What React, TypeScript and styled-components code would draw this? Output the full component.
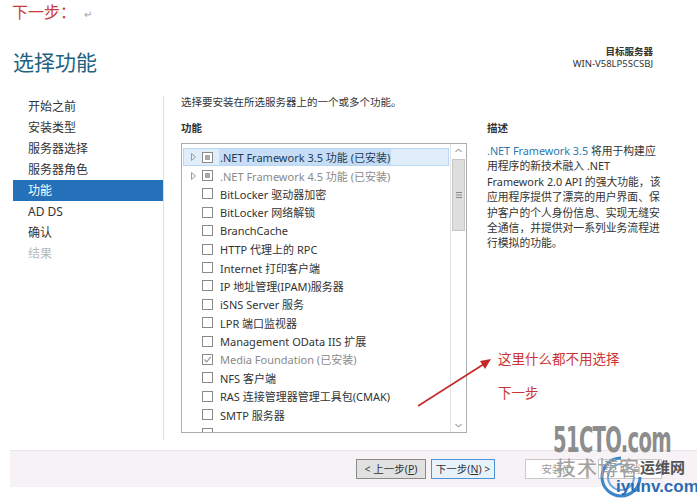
import React from 'react';
import styled, { createGlobalStyle } from 'styled-components';

const GlobalStyle = createGlobalStyle`
  html, body {
    margin: 0;
    padding: 0;
    background: #fff;
  }
  body {
    font-family: "Noto Sans", "Noto Sans CJK SC", sans-serif;
    color: #333;
  }
`;

const Page = styled.div`
  position: relative;
  width: 697px;
  height: 502px;
  overflow: hidden;
  background: #fff;
`;

// 顶部的红色批注
const NoteLine = styled.div`
  height: 22px;
  padding-left: 12px;
  font-family: "Noto Sans CJK SC", sans-serif;
  font-size: 16px;
  line-height: 22px;
  color: #c83a3a;
`;

const ReturnMark = styled.span`
  margin-left: 8px;
  font-size: 10px;
  color: #999;
`;

const Header = styled.header`
  display: flex;
  justify-content: space-between;
  align-items: flex-start;
  height: 50px;
  margin-top: 24px;
  padding: 0 44px 0 13px;
`;

const Title = styled.h1`
  margin: 0;
  font-family: "Noto Sans CJK SC", sans-serif;
  font-size: 21px;
  font-weight: 400;
  line-height: 30px;
  color: #23617f;
`;

const ServerInfo = styled.div`
  text-align: right;
  font-size: 9.5px;
  line-height: 12px;
  color: #333;
`;

const ServerLabel = styled.div`
  font-weight: 700;
`;

const Main = styled.div`
  display: flex;
  height: 344px;
`;

const Nav = styled.nav`
  width: 150px;
  margin-left: 13px;
  border-right: 1px solid #dedede;
`;

const NavItem = styled.div<{ $active?: boolean; $disabled?: boolean }>`
  height: 21px;
  padding-left: 15px;
  font-size: 12px;
  line-height: 21px;
  background: ${p => (p.$active ? '#2470b9' : 'transparent')};
  color: ${p => (p.$active ? '#fff' : p.$disabled ? '#b8b8b8' : '#333')};
`;

const Content = styled.section`
  flex: 1;
  padding-left: 17px;
`;

const Intro = styled.div`
  font-size: 10.5px;
  line-height: 12px;
  color: #333;
`;

const Columns = styled.div`
  display: flex;
  gap: 20px;
  margin-top: 13px;
`;

const FeatureColumn = styled.div`
  width: 286px;
`;

const DescColumn = styled.div`
  width: 180px;
`;

const Heading = styled.div`
  font-size: 10.5px;
  font-weight: 700;
  line-height: 14px;
  color: #333;
`;

const ListBox = styled.div`
  display: flex;
  height: 288px;
  margin-top: 8px;
  border: 1px solid #acacac;
  overflow: hidden;
`;

const Rows = styled.div`
  flex: 1;
  padding-top: 4px;
  overflow: hidden;
`;

const Row = styled.div<{ $selected?: boolean; $dim?: boolean }>`
  display: flex;
  align-items: center;
  height: 18.4px;
  margin: 0 1px;
  box-sizing: border-box;
  font-size: 11px;
  white-space: nowrap;
  color: ${p => (p.$dim ? '#8a8a8a' : '#333')};
  background: ${p => (p.$selected ? '#e0edfb' : 'transparent')};
  border: 1px solid ${p => (p.$selected ? '#b9d7f3' : 'transparent')};
`;

const Expander = styled.span`
  width: 17px;
  display: flex;
  justify-content: center;
  padding-left: 1px;
`;

const Box = styled.span`
  position: relative;
  width: 11px;
  height: 11px;
  box-sizing: border-box;
  border: 1px solid #8a8a8a;
  background: #fff;
  margin-right: 6px;
  display: flex;
  align-items: center;
  justify-content: center;
`;

const Partial = styled.span`
  width: 5px;
  height: 5px;
  background: #a8a8a8;
`;

const Label = styled.span<{ $selected?: boolean }>`
  padding: 0 1px;
  background: ${p => (p.$selected ? '#c6ddf5' : 'transparent')};
  color: ${p => (p.$selected ? '#1f3a55' : 'inherit')};
`;

const Scrollbar = styled.div`
  display: flex;
  flex-direction: column;
  width: 15px;
  border-left: 1px solid #e3e3e3;
  background: #fff;
`;

const ScrollArrow = styled.div`
  height: 13px;
  display: flex;
  align-items: center;
  justify-content: center;
`;

const Track = styled.div`
  flex: 1;
  padding: 2px 1px;
`;

const Thumb = styled.div`
  height: 72px;
  box-sizing: border-box;
  border: 1px solid #c6c6c6;
  background: #dedede;
  display: flex;
  align-items: center;
  justify-content: center;
`;

const Desc = styled.div`
  margin-top: 8px;
  font-size: 10.8px;
  line-height: 15.4px;
  color: #333;
  white-space: nowrap;
`;

const Link = styled.span`
  color: #2a78b0;
`;

const Footer = styled.footer`
  display: flex;
  align-items: center;
  justify-content: flex-end;
  height: 37px;
  margin: 10px 0 0 10px;
  padding-right: 35px;
  box-sizing: border-box;
  background: #f6f2f5;
  border-top: 1px solid #e8e3e7;
`;

const Button = styled.button<{ $kind?: 'default' | 'focus' | 'disabled'; $width: number; $gap?: number }>`
  width: ${p => p.$width}px;
  height: 20px;
  margin-left: ${p => p.$gap ?? 5}px;
  padding: 0;
  font-family: "Noto Sans", "Noto Sans CJK SC", sans-serif;
  font-size: 10.5px;
  line-height: 18px;
  box-sizing: border-box;
  color: ${p => (p.$kind === 'disabled' ? '#9a9a9a' : '#333')};
  background: ${p => (p.$kind === 'focus' ? '#e8f2fb' : p.$kind === 'disabled' ? '#fff' : '#e1e1e1')};
  border: 1px solid ${p => (p.$kind === 'focus' ? '#4e94d4' : p.$kind === 'disabled' ? '#c9c9c9' : '#8a8a8a')};
`;

const Key = styled.u`
  text-decoration: underline;
`;

// 图片上叠加的批注和水印
const Annotation = styled.div<{ $top: number }>`
  position: absolute;
  left: 498px;
  top: ${p => p.$top}px;
  font-family: "Noto Sans CJK SC", sans-serif;
  font-size: 13.5px;
  line-height: 20px;
  color: #cc3333;
`;

const Overlay = styled.svg`
  position: absolute;
  left: 0;
  top: 0;
  pointer-events: none;
`;

const Watermark = styled.div`
  position: absolute;
  left: 548px;
  top: 420px;
  width: 150px;
  height: 82px;
  pointer-events: none;
`;

const WmBig = styled.div`
  position: absolute;
  left: 5px;
  top: 2px;
  font-family: "DejaVu Sans", sans-serif;
  font-weight: 700;
  font-size: 28px;
  line-height: 30px;
  letter-spacing: -1px;
  color: #8d8d8d;
  transform: scale(0.7, 1.25);
  transform-origin: left top;
`;

const WmBlog = styled.div`
  position: absolute;
  left: 8px;
  top: 36px;
  font-family: "Noto Sans CJK SC", sans-serif;
  font-size: 20px;
  line-height: 24px;
  color: #a0a0a0;
  letter-spacing: 1px;
`;

const WmNet = styled.div`
  position: absolute;
  left: 92px;
  top: 37px;
  font-family: "Noto Sans CJK SC", sans-serif;
  font-weight: 700;
  font-size: 15px;
  line-height: 20px;
  color: #555;
`;

const WmSite = styled.div`
  position: absolute;
  left: 68px;
  top: 57px;
  font-family: "Liberation Sans", sans-serif;
  font-weight: 700;
  font-size: 17px;
  line-height: 20px;
  color: #2b6cb3;
`;

const WmSwirl = styled.svg`
  position: absolute;
  left: 50px;
  top: 34px;
`;

const Triangle = () => (
  <svg width="5" height="8" viewBox="0 0 5 8">
    <path d="M0.5 0.5 L4.5 4 L0.5 7.5 Z" fill="none" stroke="#9a9a9a" strokeWidth="1" />
  </svg>
);

const Check = () => (
  <svg width="9" height="9" viewBox="0 0 9 9">
    <path d="M1.5 4.5 L3.7 6.8 L7.8 1.8" fill="none" stroke="#9a9a9a" strokeWidth="1.3" />
  </svg>
);

type Feature = {
  label: string;
  expandable?: boolean;
  state?: 'partial' | 'checked';
  dim?: boolean;
  selected?: boolean;
};

const features: Feature[] = [
  { label: '.NET Framework 3.5 功能 (已安装)', expandable: true, state: 'partial', selected: true },
  { label: '.NET Framework 4.5 功能 (已安装)', expandable: true, state: 'partial', dim: true },
  { label: 'BitLocker 驱动器加密' },
  { label: 'BitLocker 网络解锁' },
  { label: 'BranchCache' },
  { label: 'HTTP 代理上的 RPC' },
  { label: 'Internet 打印客户端' },
  { label: 'IP 地址管理(IPAM)服务器' },
  { label: 'iSNS Server 服务' },
  { label: 'LPR 端口监视器' },
  { label: 'Management OData IIS 扩展' },
  { label: 'Media Foundation (已安装)', state: 'checked', dim: true },
  { label: 'NFS 客户端' },
  { label: 'RAS 连接管理器管理工具包(CMAK)' },
  { label: 'SMTP 服务器' },
  // 下一行只露出复选框的上沿
  { label: '' },
];

const steps = ['开始之前', '安装类型', '服务器选择', '服务器角色', '功能', 'AD DS', '确认', '结果'];

const App: React.FC = () => {
  return (
    <Page>
      <GlobalStyle />
      <NoteLine>
        下一步：<ReturnMark>↵</ReturnMark>
      </NoteLine>

      <Header>
        <Title>选择功能</Title>
        <ServerInfo>
          <ServerLabel>目标服务器</ServerLabel>
          <div>WIN-V58LP5SCSBJ</div>
        </ServerInfo>
      </Header>

      <Main>
        <Nav>
          {steps.map(s => (
            <NavItem key={s} $active={s === '功能'} $disabled={s === '结果'}>
              {s}
            </NavItem>
          ))}
        </Nav>

        <Content>
          <Intro>选择要安装在所选服务器上的一个或多个功能。</Intro>
          <Columns>
            <FeatureColumn>
              <Heading>功能</Heading>
              <ListBox>
                <Rows>
                  {features.map((f, i) => (
                    <Row key={i} $selected={f.selected} $dim={f.dim}>
                      <Expander>{f.expandable && <Triangle />}</Expander>
                      <Box>
                        {f.state === 'partial' && <Partial />}
                        {f.state === 'checked' && <Check />}
                      </Box>
                      {f.label && <Label $selected={f.selected}>{f.label}</Label>}
                    </Row>
                  ))}
                </Rows>
                <Scrollbar>
                  <ScrollArrow>
                    <svg width="7" height="5" viewBox="0 0 7 5">
                      <path d="M0.5 4 L3.5 1 L6.5 4" fill="none" stroke="#777" strokeWidth="1" />
                    </svg>
                  </ScrollArrow>
                  <Track>
                    <Thumb>
                      <svg width="6" height="6" viewBox="0 0 6 6">
                        <path d="M0 0.5 H6 M0 3 H6 M0 5.5 H6" stroke="#888" strokeWidth="1" />
                      </svg>
                    </Thumb>
                  </Track>
                  <ScrollArrow>
                    <svg width="7" height="5" viewBox="0 0 7 5">
                      <path d="M0.5 1 L3.5 4 L6.5 1" fill="none" stroke="#777" strokeWidth="1" />
                    </svg>
                  </ScrollArrow>
                </Scrollbar>
              </ListBox>
            </FeatureColumn>

            <DescColumn>
              <Heading>描述</Heading>
              <Desc>
                <Link>.NET Framework 3.5</Link> 将用于构建应
                <br />
                用程序的新技术融入 .NET
                <br />
                Framework 2.0 API 的强大功能，该
                <br />
                应用程序提供了漂亮的用户界面、保
                <br />
                护客户的个人身份信息、实现无缝安
                <br />
                全通信，并提供对一系列业务流程进
                <br />
                行模拟的功能。
              </Desc>
            </DescColumn>
          </Columns>
        </Content>
      </Main>

      <Footer>
        <Button $width={70} $gap={0}>
          &lt; 上一步(<Key>P</Key>)
        </Button>
        <Button $width={64} $kind="focus">
          下一步(<Key>N</Key>) &gt;
        </Button>
        <Button $width={64} $kind="disabled" $gap={30}>
          安装(<Key>I</Key>)
        </Button>
        <Button $width={64} $kind="disabled" $gap={9}>
          取消
        </Button>
      </Footer>

      <Annotation $top={348}>这里什么都不用选择</Annotation>
      <Annotation $top={382}>下一步</Annotation>

      <Overlay width="697" height="502" viewBox="0 0 697 502">
        <line x1="418" y1="406" x2="484" y2="364" stroke="#c62828" strokeWidth="1.6" />
        <path d="M491 359 L480 361 L485 369 Z" fill="#c62828" />
      </Overlay>

      <Watermark>
        <WmBig>51CTO.com</WmBig>
        <WmSwirl width="46" height="46" viewBox="0 0 46 46">
          <path d="M23 4 A19 19 0 1 0 42 23" fill="none" stroke="#3b86c8" strokeWidth="3" />
          <path d="M23 10 A13 13 0 1 0 36 23" fill="none" stroke="#6aa9dd" strokeWidth="2" />
        </WmSwirl>
        <WmBlog>技术博客</WmBlog>
        <WmNet>运维网</WmNet>
        <WmSite>iyunv.com</WmSite>
      </Watermark>
    </Page>
  );
};

export default App;
